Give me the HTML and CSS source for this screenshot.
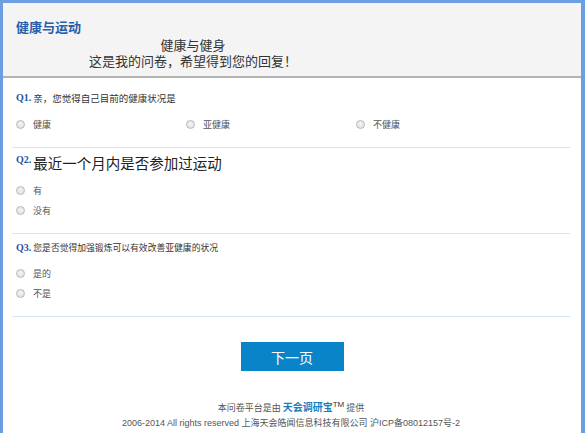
FILE: index.html
```html
<!DOCTYPE html>
<html lang="zh-CN">
<head>
<meta charset="utf-8">
<title>健康与运动</title>
<link rel="stylesheet" href="styles.css">
</head>
<body>
<div class="frame">
  <header class="head">
    <h1 class="title">健康与运动</h1>
    <div class="subtitle">
      <div class="sub-line">健康与健身</div>
      <div class="sub-line">这是我的问卷，希望得到您的回复！</div>
    </div>
  </header>
  <main class="content">
    <section class="q q1">
      <div class="q-title"><span class="q-num">Q1.</span><span class="q-text small">亲，您觉得自己目前的健康状况是</span></div>
      <div class="opts row">
        <label class="opt"><span class="radio"></span>健康</label>
        <label class="opt"><span class="radio"></span>亚健康</label>
        <label class="opt"><span class="radio"></span>不健康</label>
      </div>
    </section>
    <section class="q q2">
      <div class="q-title"><span class="q-num">Q2.</span><span class="q-text big">最近一个月内是否参加过运动</span></div>
      <div class="opts col">
        <label class="opt"><span class="radio"></span>有</label>
        <label class="opt"><span class="radio"></span>没有</label>
      </div>
    </section>
    <section class="q q3">
      <div class="q-title"><span class="q-num">Q3.</span><span class="q-text tiny">您是否觉得加强锻炼可以有效改善亚健康的状况</span></div>
      <div class="opts col">
        <label class="opt"><span class="radio"></span>是的</label>
        <label class="opt"><span class="radio"></span>不是</label>
      </div>
    </section>
    <div class="actions"><button class="next">下一页</button></div>
    <footer class="foot">
      <div class="foot1">本问卷平台是由 <b class="brand">天会调研宝</b><sup>TM</sup> 提供</div>
      <div class="foot2">2006-2014 All rights reserved 上海天会皓闻信息科技有限公司 沪ICP备08012157号-2</div>
    </footer>
  </main>
</div>
</body>
</html>
```
FILE: styles.css
```css
html, body {
  margin: 0;
  padding: 0;
  background: #fff;
}
body {
  font-family: "Noto Sans CJK SC", "Liberation Sans", sans-serif;
  color: #333;
}
.frame {
  box-sizing: border-box;
  width: 585px;
  height: 433px;
  border: 3px solid #6c9fe2;
  border-right-width: 4px;
  border-bottom: none;
  overflow: hidden;
}
.head {
  background: #f4f4f4;
  border-bottom: 2px solid #b4b4b4;
  padding: 15px 0 7px 0;
}
.title {
  margin: 0 0 0 13px;
  font-size: 13px;
  line-height: 18px;
  font-weight: bold;
  color: #2a5ea9;
}
.subtitle {
  margin-top: 1px;
  width: 380px;
  text-align: center;
  font-size: 13px;
  line-height: 16px;
  color: #333;
}
.sub-line {
  height: 16px;
}
.content {
  padding: 0 11px 0 9px;
}
.q {
  border-bottom: 1px solid #d7e4f4;
  padding-bottom: 16px;
}
.q1 { padding-top: 12px; }
.q2 { padding-top: 5px; }
.q3 { padding-top: 7px; }
.q-title {
  display: flex;
  align-items: flex-start;
  padding-left: 4px;
}
.q-num {
  font-family: "Liberation Serif", serif;
  font-weight: bold;
  color: #1f56a3;
  font-size: 10px;
  line-height: 14px;
  margin-right: 2px;
}
.q1 .q-num { line-height: 16px; }
.q-text.small { font-size: 9.5px; line-height: 16px; color: #333; }
.q-text.big { font-size: 14.5px; line-height: 20px; color: #222; }
.q-text.tiny { font-size: 8.8px; line-height: 14px; color: #333; }
.opts {
  padding-left: 4px;
  margin-top: 11px;
}
.q2 .opts { margin-top: 10px; }
.opts.row {
  display: grid;
  grid-template-columns: 170px 170px 170px;
}
.opts.col {
  display: flex;
  flex-direction: column;
  gap: 6px;
}
.opt {
  display: flex;
  align-items: center;
  height: 14px;
  font-size: 9px;
  color: #555;
}
.radio {
  box-sizing: border-box;
  width: 9px;
  height: 9px;
  border-radius: 50%;
  border: 1px solid #b9b9b9;
  background: radial-gradient(circle at 50% 40%, #f4f4f4 0%, #dcdcdc 100%);
  margin-right: 8px;
}
.actions {
  display: flex;
  justify-content: center;
  margin-top: 25px;
  padding-left: 2px;
}
.next {
  width: 103px;
  height: 29px;
  border: none;
  background: #0a84c8;
  color: #fff;
  font-family: "Noto Sans CJK SC", sans-serif;
  font-size: 14px;
  padding: 0;
}
.foot {
  margin-top: 28px;
  text-align: center;
  font-size: 9px;
  line-height: 16px;
  color: #555;
}
.brand {
  color: #1a7cc0;
  font-size: 10px;
}
.foot sup {
  font-family: "Liberation Sans", sans-serif;
  font-size: 8px;
  line-height: 0;
  color: #333;
}
.foot2 {
  font-family: "Liberation Sans", "Noto Sans CJK SC", sans-serif;
  margin-top: -1px;
}
```
